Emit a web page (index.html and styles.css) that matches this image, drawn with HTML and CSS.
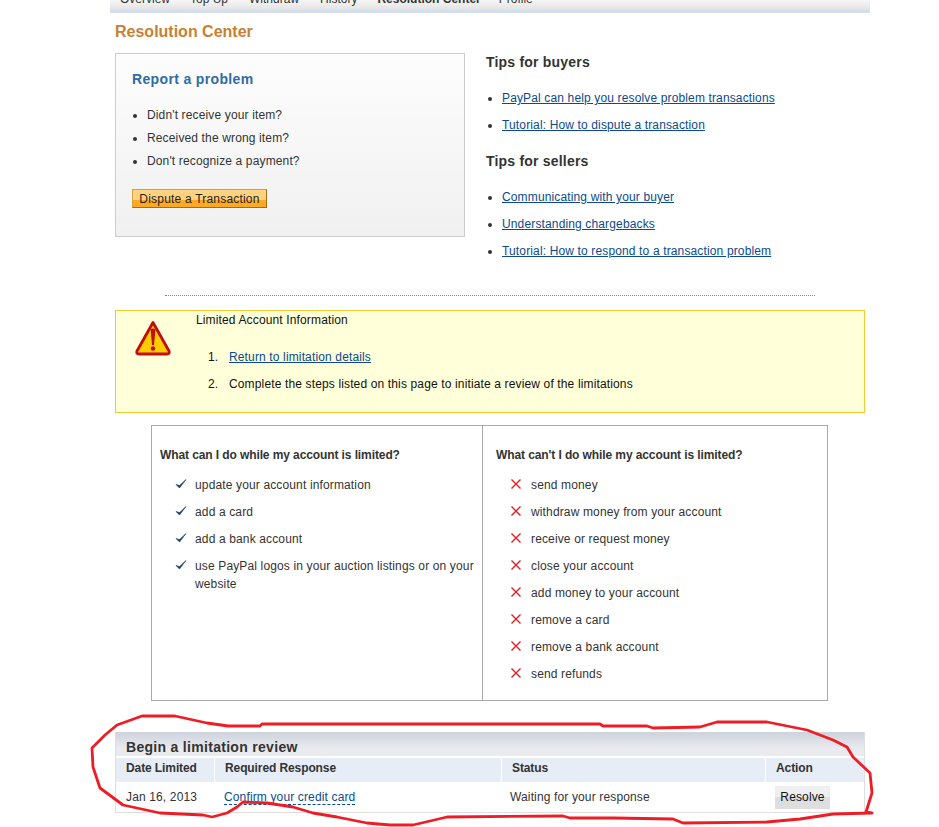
FILE: index.html
```html
<!DOCTYPE html>
<html lang="en">
<head>
    <meta charset="UTF-8">
    <title>Resolution Center</title>
    <link rel="stylesheet" href="styles.css">
</head>
<body>
    <div class="page">
        <div class="nav">
            <a>Overview</a>
            <a>Top Up</a>
            <a>Withdraw</a>
            <a>History</a>
            <a class="current">Resolution Center</a>
            <a>Profile</a>
        </div>

        <div class="content">
            <h1>Resolution Center</h1>

            <div class="top-row">
                <div class="report-box">
                    <h2>Report a problem</h2>
                    <ul>
                        <li>Didn't receive your item?</li>
                        <li>Received the wrong item?</li>
                        <li>Don't recognize a payment?</li>
                    </ul>
                    <button class="dispute-btn">Dispute a Transaction</button>
                </div>
                <div class="tips">
                    <h3>Tips for buyers</h3>
                    <ul>
                        <li><a href="#">PayPal can help you resolve problem transactions</a></li>
                        <li><a href="#">Tutorial: How to dispute a transaction</a></li>
                    </ul>
                    <h3>Tips for sellers</h3>
                    <ul>
                        <li><a href="#">Communicating with your buyer</a></li>
                        <li><a href="#">Understanding chargebacks</a></li>
                        <li><a href="#">Tutorial: How to respond to a transaction problem</a></li>
                    </ul>
                </div>
            </div>

            <div class="dotted"></div>

            <div class="notice">
                <svg class="warn-icon" width="36" height="36" viewBox="0 0 36 36">
                    <path d="M18 2.5 L34 31 Q35 34 32 34 L4 34 Q1 34 2 31 Z" fill="#ffcc00" stroke="#c00d0d" stroke-width="2.8" stroke-linejoin="round"/>
                    <path d="M15.6 9.5 Q18 7.5 20.4 9.5 L19 25 L17 25 Z" fill="#c00d0d"/>
                    <circle cx="18" cy="28.5" r="2.2" fill="#c00d0d"/>
                </svg>
                <div class="notice-text">
                    <p>Limited Account Information</p>
                    <ol>
                        <li><a href="#">Return to limitation details</a></li>
                        <li>Complete the steps listed on this page to initiate a review of the limitations</li>
                    </ol>
                </div>
            </div>

            <div class="limits">
                <div class="limits-col">
                    <h4>What can I do while my account is limited?</h4>
                    <ul class="marks">
                        <li><svg width="12" height="12" viewBox="0 0 12 12"><path d="M1 6.5 L4.5 10 L11 1.5 L4.6 7.6 Z" fill="#1a3c66" stroke="#1a3c66" stroke-width="0.6"/></svg>update your account information</li>
                        <li><svg width="12" height="12" viewBox="0 0 12 12"><path d="M1 6.5 L4.5 10 L11 1.5 L4.6 7.6 Z" fill="#1a3c66" stroke="#1a3c66" stroke-width="0.6"/></svg>add a card</li>
                        <li><svg width="12" height="12" viewBox="0 0 12 12"><path d="M1 6.5 L4.5 10 L11 1.5 L4.6 7.6 Z" fill="#1a3c66" stroke="#1a3c66" stroke-width="0.6"/></svg>add a bank account</li>
                        <li><svg width="12" height="12" viewBox="0 0 12 12"><path d="M1 6.5 L4.5 10 L11 1.5 L4.6 7.6 Z" fill="#1a3c66" stroke="#1a3c66" stroke-width="0.6"/></svg>use PayPal logos in your auction listings or on your website</li>
                    </ul>
                </div>
                <div class="limits-col right">
                    <h4>What can't I do while my account is limited?</h4>
                    <ul class="marks">
                        <li><svg width="12" height="12" viewBox="0 0 12 12"><path d="M1.5 1.5 L10.5 10.5 M10.5 1.5 L1.5 10.5" stroke="#e01b24" stroke-width="1.4"/></svg>send money</li>
                        <li><svg width="12" height="12" viewBox="0 0 12 12"><path d="M1.5 1.5 L10.5 10.5 M10.5 1.5 L1.5 10.5" stroke="#e01b24" stroke-width="1.4"/></svg>withdraw money from your account</li>
                        <li><svg width="12" height="12" viewBox="0 0 12 12"><path d="M1.5 1.5 L10.5 10.5 M10.5 1.5 L1.5 10.5" stroke="#e01b24" stroke-width="1.4"/></svg>receive or request money</li>
                        <li><svg width="12" height="12" viewBox="0 0 12 12"><path d="M1.5 1.5 L10.5 10.5 M10.5 1.5 L1.5 10.5" stroke="#e01b24" stroke-width="1.4"/></svg>close your account</li>
                        <li><svg width="12" height="12" viewBox="0 0 12 12"><path d="M1.5 1.5 L10.5 10.5 M10.5 1.5 L1.5 10.5" stroke="#e01b24" stroke-width="1.4"/></svg>add money to your account</li>
                        <li><svg width="12" height="12" viewBox="0 0 12 12"><path d="M1.5 1.5 L10.5 10.5 M10.5 1.5 L1.5 10.5" stroke="#e01b24" stroke-width="1.4"/></svg>remove a card</li>
                        <li><svg width="12" height="12" viewBox="0 0 12 12"><path d="M1.5 1.5 L10.5 10.5 M10.5 1.5 L1.5 10.5" stroke="#e01b24" stroke-width="1.4"/></svg>remove a bank account</li>
                        <li><svg width="12" height="12" viewBox="0 0 12 12"><path d="M1.5 1.5 L10.5 10.5 M10.5 1.5 L1.5 10.5" stroke="#e01b24" stroke-width="1.4"/></svg>send refunds</li>
                    </ul>
                </div>
            </div>

            <div class="review">
                <h2>Begin a limitation review</h2>
                <div class="review-head">
                    <div>Date Limited</div>
                    <div>Required Response</div>
                    <div>Status</div>
                    <div>Action</div>
                </div>
                <div class="review-row">
                    <div>Jan 16, 2013</div>
                    <div><a href="#">Confirm your credit card</a></div>
                    <div>Waiting for your response</div>
                    <div><button class="resolve-btn">Resolve</button></div>
                </div>
            </div>
        </div>
    </div>

    <!-- red marker scribble drawn over the screenshot -->
    <svg class="scribble" width="939" height="827" viewBox="0 0 939 827">
        <path d="M500 724 L262 724 L260 726 L228 726 L207 723 L175 716 L142 716 L117 725 L105 735 L92 748 L93 767 L100 788 L123 805 L160 813 L203 815 L212 817 L227 813 L237 807 L243 802 L267 803 L293 807 L313 813 L337 817 L367 823 L390 825 L413 825 L447 817 L563 816 L570 818 L613 818 L673 819 L683 823 L767 822 L800 819 L820 816 L833 814 L872 813 L866 812 L872 793 L870 773 L853 757 L847 747 L833 740 L807 730 L767 722 L717 722 L700 727 L653 728 L647 726 L603 726 L600 724 Z" fill="none" stroke="#ee1c25" stroke-width="2.8" stroke-linejoin="round"/>
    </svg>
</body>
</html>
```

FILE: styles.css
```css
html, body {
    height: 827px;
    overflow: hidden;
}

body {
    font-family: "Liberation Sans", Arial, sans-serif;
    font-size: 12px;
    letter-spacing: 0.14px;
    color: #333;
    background-color: white;
    margin: 0;
}

a {
    color: #0b4a8f;
}

.page {
    width: 760px;
    margin-left: 110px;
}

.nav {
    display: flex;
    height: 10px;
    overflow: hidden;
    background: linear-gradient(#f6f6f6, #e2e2e2);
    border-bottom: 3px solid #d5dfec;
    padding-left: 10px;
    line-height: 14px;
    letter-spacing: 0;
}

.nav a {
    color: #333;
    margin-top: -8px;
    margin-right: 20px;
}

.nav a:nth-child(2) { margin-right: 21px; }
.nav a:nth-child(3) { margin-right: 21px; }
.nav a:nth-child(4) { margin-right: 20px; }
.nav a:nth-child(5) { margin-right: 18px; }

.nav a.current {
    font-weight: bold;
}

.content {
    padding: 0 5px;
}

h1 {
    font-size: 16px;
    line-height: 18px;
    letter-spacing: 0;
    color: #c87f34;
    margin: 10px 0 12px;
}

.top-row {
    display: flex;
    align-items: flex-start;
}

.report-box {
    width: 350px;
    height: 184px;
    box-sizing: border-box;
    border: 1px solid #ccc;
    background: linear-gradient(#fdfdfd, #f0f0f0);
    padding: 16px;
}

.report-box h2 {
    font-size: 14px;
    line-height: 18px;
    letter-spacing: 0.35px;
    color: #2f6ca5;
    margin: 0 0 19px;
}

.report-box ul, .tips ul {
    margin: 0;
    padding: 0 0 0 15px;
}

.report-box li {
    height: 23px;
    line-height: 16px;
}

.dispute-btn {
    display: block;
    width: 135px;
    height: 19px;
    margin-top: 13px;
    padding: 0;
    font-family: inherit;
    font-size: 12px;
    letter-spacing: 0.2px;
    line-height: 16px;
    color: #222;
    border: 1px solid #d5a040;
    border-right-color: #a86c10;
    border-bottom-color: #a86c10;
    background: linear-gradient(#ffd27f 60%, #ffa822 60%);
}

.tips {
    margin-left: 21px;
    padding-top: 1px;
}

.tips h3 {
    font-size: 14px;
    line-height: 16px;
    letter-spacing: 0.2px;
    color: #333;
    margin: 0 0 20px;
}

.tips ul {
    margin-bottom: 9px;
    padding-left: 16px;
}

.tips ul:last-child {
    margin-bottom: 0;
}

.tips li {
    height: 27px;
    line-height: 16px;
}

.dotted {
    width: 650px;
    margin: 25px 0 14px 50px;
    border-top: 1px dotted #888;
}

.notice {
    display: flex;
    height: 103px;
    box-sizing: border-box;
    border: 1px solid #f6c92f;
    background-color: #ffffd9;
    color: #111;
}

.warn-icon {
    margin: 9px 0 0 19px;
}

.notice-text {
    margin-left: 25px;
}

.notice-text p {
    margin: 1px 0 21px;
    line-height: 16px;
}

.notice-text ol {
    list-style: none;
    counter-reset: step;
    margin: 0;
    padding-left: 12px;
}

.notice-text li {
    counter-increment: step;
    height: 27px;
    line-height: 16px;
}

.notice-text li::before {
    content: counter(step) ".";
    display: inline-block;
    width: 21px;
}

.limits {
    display: flex;
    width: 677px;
    height: 276px;
    box-sizing: border-box;
    margin: 12px 0 31px 36px;
    border: 1px solid #aaa;
}

.limits-col {
    flex: none;
    width: 330px;
    box-sizing: border-box;
    padding: 21px 4px 0 8px;
}

.limits-col.right {
    flex: 1;
    padding-left: 13px;
    border-left: 1px solid #aaa;
}

.limits-col h4 {
    font-size: 12px;
    line-height: 16px;
    letter-spacing: -0.1px;
    margin: 0 0 13px;
}

.marks {
    list-style: none;
    margin: 0;
    padding: 0;
}

.marks li {
    position: relative;
    padding-left: 35px;
    margin-bottom: 9px;
    line-height: 18px;
}

.marks svg {
    position: absolute;
    left: 15px;
    top: 2px;
}

.right .marks svg {
    left: 14px;
}

.review {
    border: 1px solid #dedede;
    border-top: 0;
}

.review h2 {
    font-size: 14px;
    line-height: 16px;
    letter-spacing: 0.3px;
    color: #333;
    height: 24px;
    box-sizing: border-box;
    margin: 0 0 2px;
    padding: 7px 0 0 10px;
    background: linear-gradient(#cdd3dc, #e9ebef 70%);
}

.review-head, .review-row {
    display: grid;
    grid-template-columns: 99px 287px 264px 1fr;
}

.review-head {
    height: 24px;
    line-height: 20px;
    font-weight: bold;
    letter-spacing: -0.1px;
}

.review-head div {
    background-color: #e6edf7;
    border-right: 1px solid white;
    padding-left: 10px;
}

.review-head div:last-child {
    border-right: 0;
}

.review-row {
    height: 30px;
    align-items: center;
}

.review-row div {
    padding-left: 10px;
}

.review-row div:nth-child(2) {
    padding-left: 9px;
}

.review-row div:nth-child(3) {
    padding-left: 8px;
}

.review-row div:nth-child(4) {
    padding-left: 9px;
}

.review-row a {
    text-decoration: none;
    border-bottom: 1px dashed #0b4a8f;
}

.resolve-btn {
    display: block;
    width: 55px;
    height: 23px;
    padding: 0;
    border: 0;
    font-family: inherit;
    font-size: 12px;
    letter-spacing: 0.14px;
    color: #111;
    background: linear-gradient(#efefef 50%, #dedede 50%);
}

.scribble {
    position: absolute;
    left: 0;
    top: 0;
    pointer-events: none;
}
```
